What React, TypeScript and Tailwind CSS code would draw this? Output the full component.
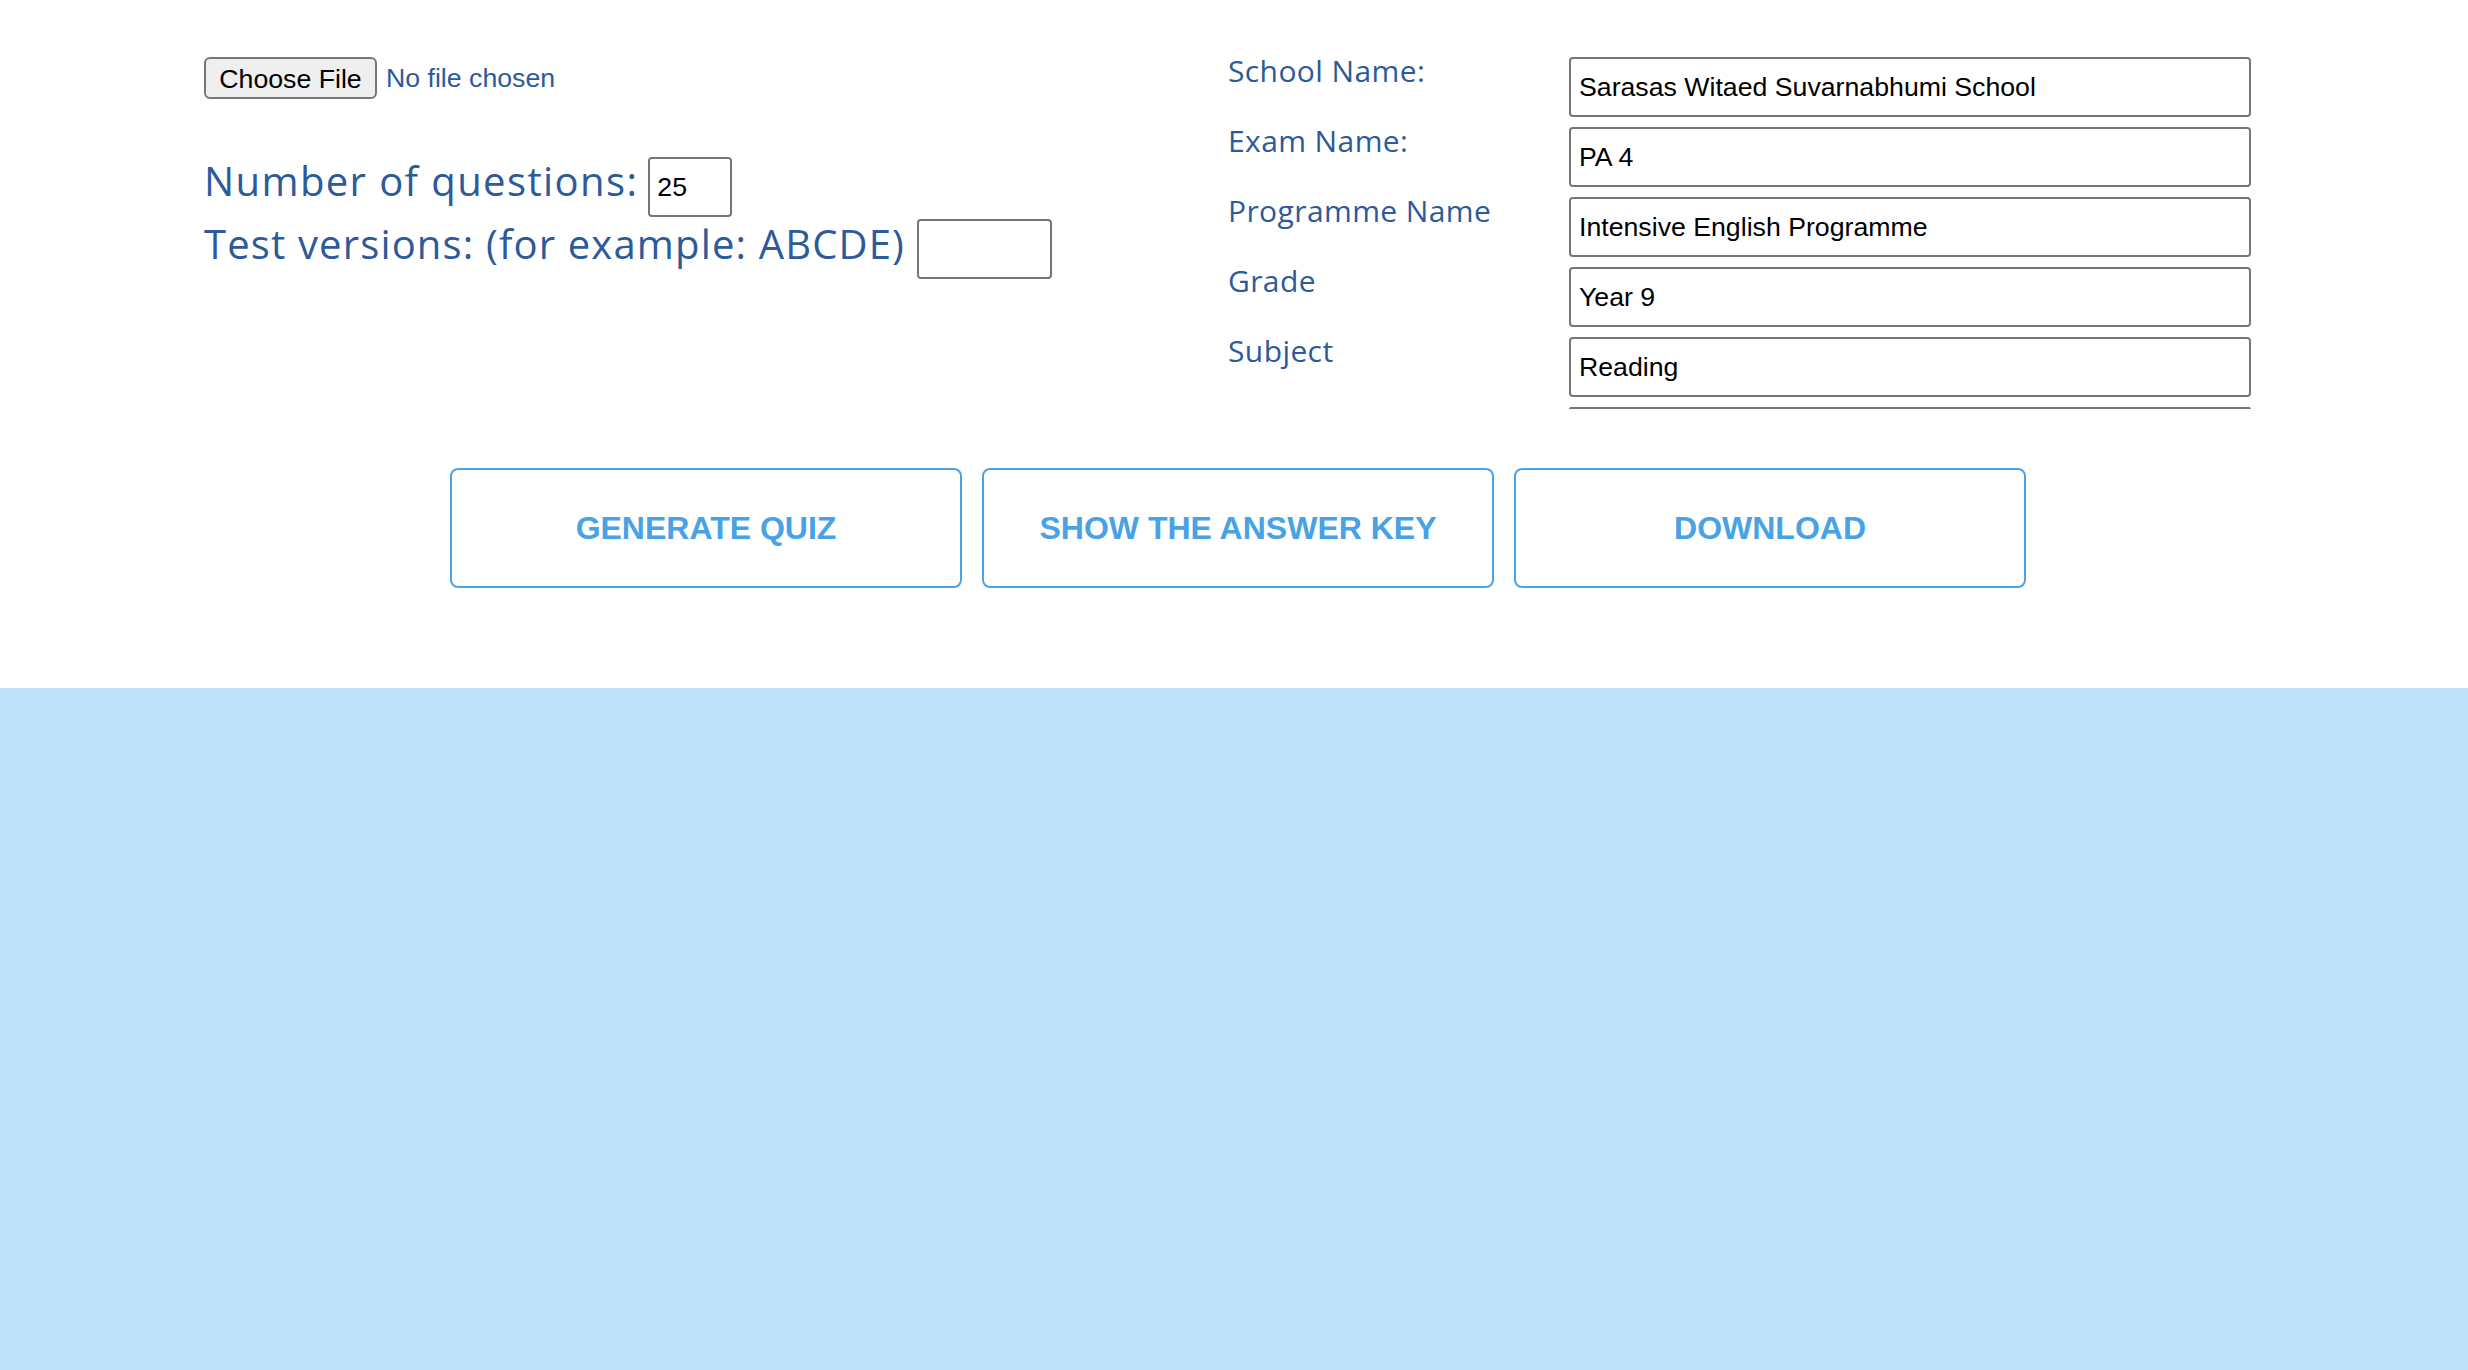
import { useState } from 'react';

const fields = [
  { label: 'School Name:', value: 'Sarasas Witaed Suvarnabhumi School' },
  { label: 'Exam Name:', value: 'PA 4' },
  { label: 'Programme Name', value: 'Intensive English Programme' },
  { label: 'Grade', value: 'Year 9' },
  { label: 'Subject', value: 'Reading' },
];

const heading = "font-['Open_Sans','Lato',sans-serif] text-[#2c5a9a]";
const control = "font-['Liberation_Sans',Arial,sans-serif] text-[26.7px] text-black";

export default function App() {
  const [questions, setQuestions] = useState('25');
  const [versions, setVersions] = useState('');
  const [info, setInfo] = useState(fields.map((f) => f.value));

  return (
    <div className="min-h-screen flex flex-col bg-white">
      <div className="h-[688px] shrink-0">
        <div className="flex pt-[57px] pl-[204px]">
          <div className="w-[1024px]">
            <div className="flex items-center h-[42px]">
              <button
                className={`${control} h-[42px] w-[173px] bg-[#efefef] border-2 border-[#767676] rounded-[6px]`}
              >
                Choose File
              </button>
              <span className="ml-[9px] font-['Liberation_Sans',Arial,sans-serif] text-[26.7px] text-[#2c5a9a]">
                No file chosen
              </span>
            </div>

            <div className="mt-[58px] flex items-center">
              <span className={`${heading} text-[40px] leading-[60px] tracking-[1.4px] -translate-y-[6px]`}>
                Number of questions:
              </span>
              <input
                value={questions}
                onChange={(e) => setQuestions(e.target.value)}
                className={`${control} ml-[10px] w-[84px] h-[60px] px-[7px] border-2 border-[#767676] rounded-[4px] outline-none`}
              />
            </div>
            <div className="mt-[2px] flex items-center">
              <span className={`${heading} text-[40px] leading-[60px] tracking-[1.15px] -translate-y-[5px]`}>
                Test versions: (for example: ABCDE)
              </span>
              <input
                value={versions}
                onChange={(e) => setVersions(e.target.value)}
                className={`${control} ml-[12px] w-[135px] h-[60px] px-[7px] border-2 border-[#767676] rounded-[4px] outline-none`}
              />
            </div>
          </div>

          <div className="flex flex-col gap-[10px]">
            {fields.map((f, i) => (
              <div key={f.label} className="flex items-start h-[60px]">
                <label className={`${heading} w-[341px] text-[30px] leading-[40px] tracking-[0.4px] -mt-[6px]`}>
                  {f.label}
                </label>
                <input
                  value={info[i]}
                  onChange={(e) => {
                    const next = [...info];
                    next[i] = e.target.value;
                    setInfo(next);
                  }}
                  className={`${control} w-[682px] h-[60px] px-[8px] border-2 border-[#767676] rounded-[4px] outline-none`}
                />
              </div>
            ))}
            <div className="ml-[341px] w-[682px] h-[2px] bg-[#767676] rounded-t-[2px]" />
          </div>
        </div>

        <div className="mt-[59px] flex justify-center gap-[20px] pl-[8px]">
          {['Generate Quiz', 'Show the answer key', 'Download'].map((b) => (
            <button
              key={b}
              className="w-[512px] h-[120px] border-2 border-[#4aa3e8] rounded-[8px] bg-white font-['Liberation_Sans',Arial,sans-serif] font-bold text-[32px] uppercase text-[#48a2e6]"
            >
              {b}
            </button>
          ))}
        </div>
      </div>
      <div className="flex-1 bg-[#bee3f8]" />
    </div>
  );
}
